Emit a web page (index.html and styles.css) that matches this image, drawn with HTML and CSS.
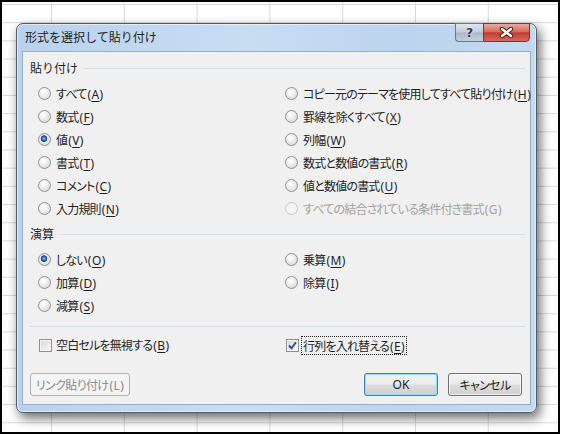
FILE: index.html
```html
<!DOCTYPE html>
<html lang="ja">

<head>
    <meta charset="UTF-8">
    <meta name="viewport" content="width=device-width, initial-scale=1.0">
    <title>形式を選択して貼り付け</title>
    <link rel="stylesheet" href="styles.css">
</head>

<body>
    <div class="screen">
        <div class="dialog">
            <div class="titlebar">
                <span class="title">形式を選択して貼り付け</span>
                <div class="caption-btns">
                    <span class="cap-btn help">?</span>
                    <span class="cap-btn close">
                        <svg width="15" height="11" viewBox="0 0 15 11">
                            <path d="M3 2 L12 9 M12 2 L3 9" stroke="#3a2420" stroke-width="4.4" stroke-linecap="round" fill="none" />
                            <path d="M3 2 L12 9 M12 2 L3 9" stroke="#ffffff" stroke-width="2.4" stroke-linecap="round" fill="none" />
                        </svg>
                    </span>
                </div>
            </div>

            <div class="panel">
                <div class="group-head"><span>貼り付け</span><i class="rule"></i></div>
                <div class="options">
                    <label class="opt"><span class="radio"></span><span>すべて<span class="k">(<u>A</u>)</span></span></label>
                    <label class="opt"><span class="radio"></span><span>コピー元のテーマを使用してすべて貼り付け<span class="k">(<u>H</u>)</span></span></label>
                    <label class="opt"><span class="radio"></span><span>数式<span class="k">(<u>F</u>)</span></span></label>
                    <label class="opt"><span class="radio"></span><span>罫線を除くすべて<span class="k">(<u>X</u>)</span></span></label>
                    <label class="opt"><span class="radio on"></span><span>値<span class="k">(<u>V</u>)</span></span></label>
                    <label class="opt"><span class="radio"></span><span>列幅<span class="k">(<u>W</u>)</span></span></label>
                    <label class="opt"><span class="radio"></span><span>書式<span class="k">(<u>T</u>)</span></span></label>
                    <label class="opt"><span class="radio"></span><span>数式と数値の書式<span class="k">(<u>R</u>)</span></span></label>
                    <label class="opt"><span class="radio"></span><span>コメント<span class="k">(<u>C</u>)</span></span></label>
                    <label class="opt"><span class="radio"></span><span>値と数値の書式<span class="k">(<u>U</u>)</span></span></label>
                    <label class="opt"><span class="radio"></span><span>入力規則<span class="k">(<u>N</u>)</span></span></label>
                    <label class="opt disabled"><span class="radio"></span><span>すべての結合されている条件付き書式<span class="k">(G)</span></span></label>
                </div>

                <div class="group-head second"><span>演算</span><i class="rule"></i></div>
                <div class="options">
                    <label class="opt"><span class="radio on"></span><span>しない<span class="k">(<u>O</u>)</span></span></label>
                    <label class="opt"><span class="radio"></span><span>乗算<span class="k">(<u>M</u>)</span></span></label>
                    <label class="opt"><span class="radio"></span><span>加算<span class="k">(<u>D</u>)</span></span></label>
                    <label class="opt"><span class="radio"></span><span>除算<span class="k">(<u>I</u>)</span></span></label>
                    <label class="opt"><span class="radio"></span><span>減算<span class="k">(<u>S</u>)</span></span></label>
                </div>

                <div class="sep"></div>

                <div class="checks">
                    <label class="opt"><span class="check"></span><span>空白セルを無視する<span class="k">(<u>B</u>)</span></span></label>
                    <label class="opt focused">
                        <span class="check">
                            <svg width="11" height="11" viewBox="0 0 11 11">
                                <path d="M2 5.5 L4.5 8.3 L9 2.2" stroke="#2b4a86" stroke-width="1.9" fill="none" />
                            </svg>
                        </span>
                        <span class="focus">行列を入れ替える<span class="k">(<u>E</u>)</span></span>
                    </label>
                </div>

                <div class="buttons">
                    <button class="btn link" disabled>リンク貼り付け<span class="k">(L)</span></button>
                    <button class="btn default">OK</button>
                    <button class="btn">キャンセル</button>
                </div>
            </div>
        </div>
    </div>
</body>

</html>
```

FILE: styles.css
```css
body {
    margin: 0;
    background-color: #ffffff;
    font-family: "Noto Sans CJK JP", "Liberation Sans", sans-serif;
    font-size: 12px;
    color: #1e1e1e;
}

.screen {
    box-sizing: border-box;
    width: 560px;
    height: 434px;
    border: 2px solid #000000;
    padding: 21px 0 0 14px;
    background-color: #ffffff;
    background-image:
        linear-gradient(to right, #d6d8da 1px, transparent 1px),
        linear-gradient(to bottom, #d6d8da 1px, transparent 1px);
    background-size: 72.8px 100%, 100% 18.2px;
    background-position: 49px 0, 0 2px;
}

.dialog {
    width: 521px;
    box-sizing: border-box;
    border: 1px solid #4f5b66;
    border-radius: 7px;
    padding: 0 5px 7px 5px;
    background: linear-gradient(to right, #b9d2ec, #c8ddf2 45%, #bcd4ed 75%, #c4daf0);
    box-shadow: 3px 5px 12px rgba(0, 0, 0, 0.6), inset 0 0 0 1px rgba(255, 255, 255, 0.55);
}

.titlebar {
    height: 27px;
    display: flex;
    align-items: flex-start;
    justify-content: space-between;
    padding-left: 3px;
    padding-right: 1px;
}

.title {
    line-height: 25px;
    color: #1b1b1b;
}

.caption-btns {
    display: flex;
    margin-top: -1px;
}

.cap-btn {
    height: 19px;
    box-sizing: border-box;
    display: flex;
    align-items: center;
    justify-content: center;
}

.help {
    width: 28px;
    border: 1px solid #66788c;
    border-right: none;
    border-radius: 0 0 0 4px;
    background: linear-gradient(#dfe6ee, #c2ccd8 48%, #abb8c8 52%, #c4cfdc);
    color: #2a3b52;
    font-family: "DejaVu Sans", sans-serif;
    font-weight: bold;
    font-size: 13px;
    text-shadow: 0 0 2px #ffffff, 0 0 1px #ffffff;
}

.close {
    width: 47px;
    border: 1px solid #7a3530;
    border-radius: 0 0 4px 0;
    background: linear-gradient(#e9aa9e, #d66c60 45%, #c23d31 52%, #d4695b);
}

.panel {
    background-color: #f0f0f0;
    border: 1px solid #97aec4;
    padding: 9px 5px 8px 7px;
}

.group-head {
    display: flex;
    align-items: center;
    height: 14px;
    line-height: 14px;
    color: #1e1e1e;
}

.group-head.second {
    margin-top: 7px;
}

.rule {
    flex: 1;
    height: 1px;
    margin-left: 6px;
    background-color: #d5dde5;
}

.options {
    display: grid;
    grid-template-columns: 247px 1fr;
    grid-auto-rows: 23px;
    margin-top: 7px;
    padding-left: 8px;
}

.opt {
    display: flex;
    align-items: center;
    gap: 5px;
    font-feature-settings: "palt" 1;
    letter-spacing: -0.8px;
    white-space: nowrap;
}

.k {
    font-family: "Noto Sans", sans-serif;
    letter-spacing: 0.4px;
    padding-left: 1px;
}

.opt u {
    text-decoration-thickness: 1px;
    text-underline-offset: 2px;
}

.opt.disabled {
    color: #a2a2a2;
}

.radio {
    width: 13px;
    height: 13px;
    box-sizing: border-box;
    border-radius: 50%;
    border: 1px solid #8f9193;
    background: radial-gradient(circle at 40% 35%, #ffffff 0, #f1f1f1 35%, #d0d0d0 100%);
    flex: none;
}

.radio.on {
    background:
        radial-gradient(circle at 45% 42%, #a8d6fb 0, #2f78c4 1.6px, #0e3e7c 3px, transparent 3.6px),
        radial-gradient(circle at 40% 35%, #ffffff 0, #f1f1f1 35%, #d0d0d0 100%);
}

.disabled .radio {
    border-color: #c8c8c8;
    background: #f4f4f4;
}

.sep {
    height: 1px;
    margin-top: 9px;
    background-color: #d5dde5;
}

.checks {
    display: grid;
    grid-template-columns: 247px 1fr;
    height: 20px;
    margin-top: 8px;
    padding-left: 9px;
}

.checks .opt {
    gap: 4px;
}

.checks .focused {
    gap: 2px;
}

.check {
    width: 13px;
    height: 13px;
    box-sizing: border-box;
    border: 1px solid #8e8f8f;
    background: linear-gradient(135deg, #d6d7d8, #f8f8f8);
    box-shadow: inset 0 0 0 1px #f4f4f4;
    display: flex;
    align-items: center;
    justify-content: center;
    flex: none;
}

.focus {
    border: 1px dotted #222222;
    padding: 1px 1px 0 1px;
    line-height: 15px;
}

.buttons {
    display: flex;
    margin-top: 18px;
    padding-right: 3px;
    gap: 10px;
}

.btn {
    height: 23px;
    width: 74px;
    font-family: "Noto Sans CJK JP", sans-serif;
    font-feature-settings: "palt" 1;
    letter-spacing: -0.6px;
    font-size: 12px;
    color: #1e1e1e;
    border: 1px solid #707070;
    border-radius: 3px;
    background: linear-gradient(#f2f2f2, #ebebeb 48%, #dddddd 52%, #cfcfcf);
    box-shadow: inset 0 0 0 1px rgba(255, 255, 255, 0.7);
    padding: 0;
}

.btn.default {
    margin-left: auto;
    border-color: #3c7fb1;
    box-shadow: inset 0 0 0 1px #8ee0fa;
    font-family: "Noto Sans", sans-serif;
    letter-spacing: 0;
}

.btn.link {
    width: 100px;
    color: #8a8a8a;
    border-color: #adb2b5;
    background: #f4f4f4;
    box-shadow: none;
}
```
